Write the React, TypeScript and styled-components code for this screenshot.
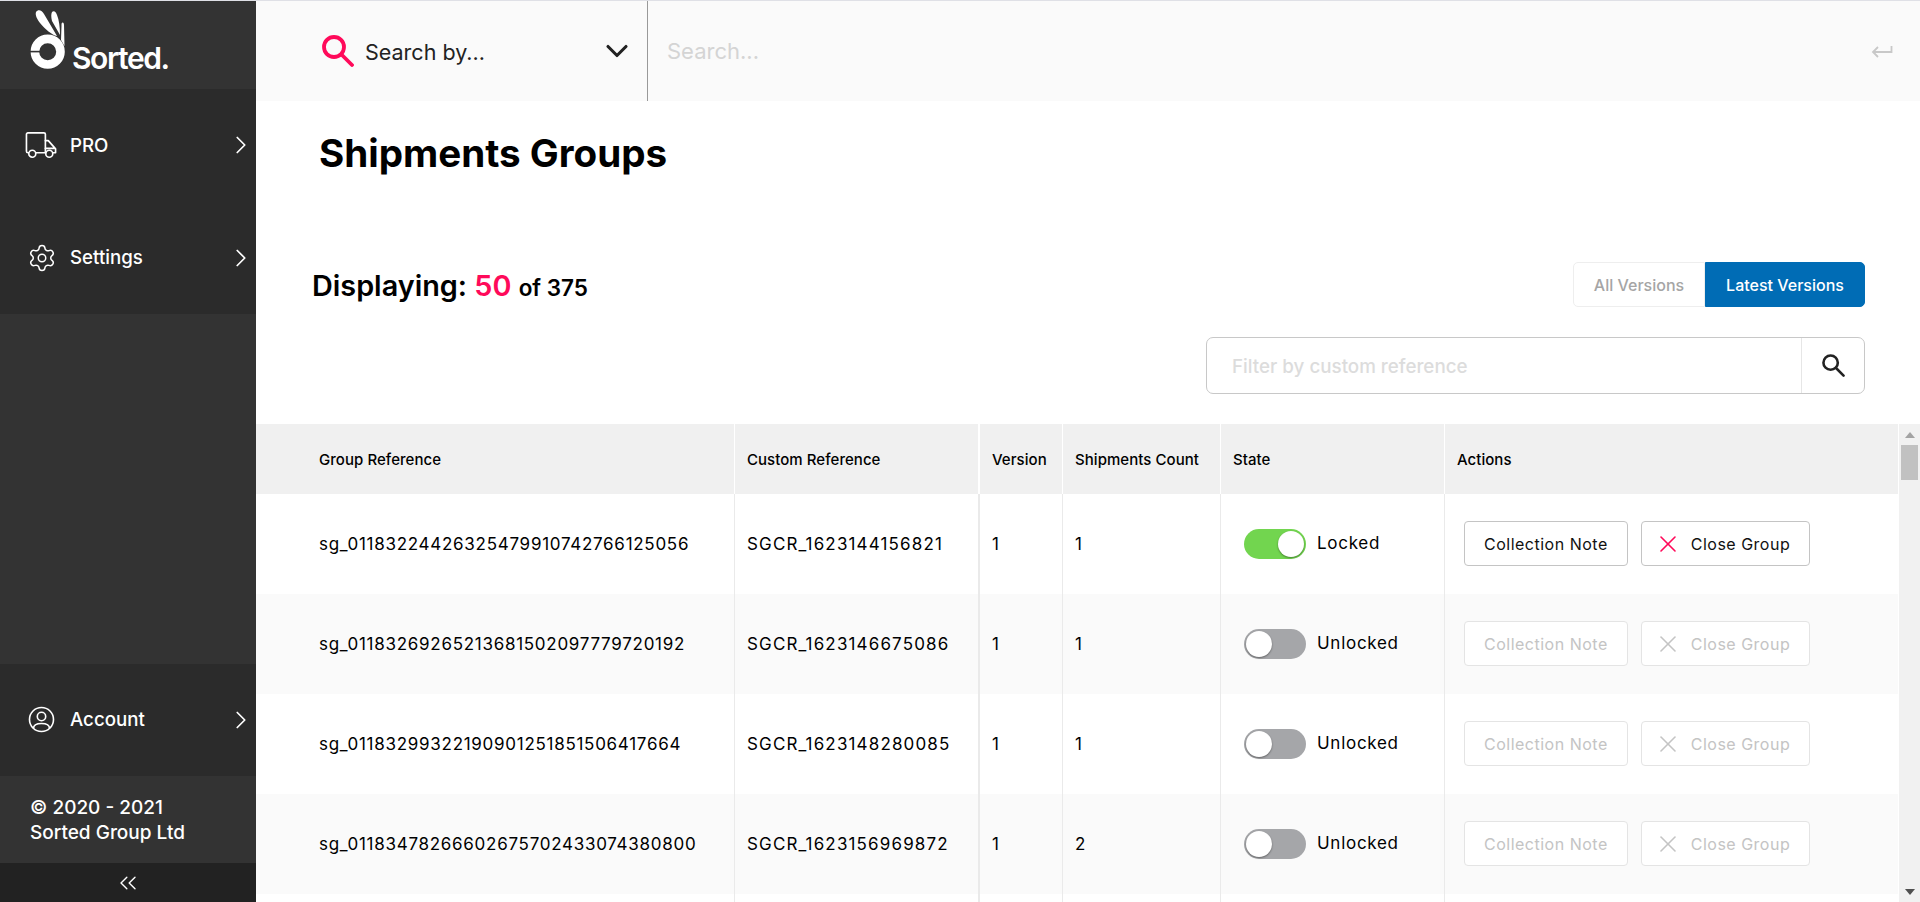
import React from 'react';
import styled, { createGlobalStyle } from 'styled-components';
import { ChevronRight, ChevronsLeft, Settings, X, ChevronDown } from 'lucide-react';

const GlobalStyle = createGlobalStyle`
  html, body {
    margin: 0;
    height: 100%;
    overflow: hidden;
    font-family: Inter, "Open Sans", sans-serif;
    color: #000;
    background: #fff;
  }
  * { box-sizing: border-box; }
`;

const Page = styled.div`
  display: flex;
  height: 902px;
  border-top: 1px solid #dfe0e6;
`;

const Sidebar = styled.aside`
  width: 256px;
  flex: none;
  display: flex;
  flex-direction: column;
  background: #333;
  color: #fff;
`;

const LogoBox = styled.div`
  height: 88px;
  flex: none;
  display: flex;
  align-items: flex-end;
  padding: 0 0 18px 30px;
  gap: 4px;
`;

const LogoText = styled.span`
  font-size: 30px;
  font-weight: 600;
  letter-spacing: -1.4px;
  line-height: 26px;
`;

const NavGroup = styled.div`
  background: #2b2b2b;
`;

const NavItem = styled.div`
  height: 112.5px;
  display: flex;
  align-items: center;
  padding-left: 25px;
  font-size: 18.7px;
  font-weight: 500;
  svg.chevron { margin-left: auto; }
`;

const IconSlot = styled.div`
  width: 33px;
  flex: none;
  display: flex;
  align-items: center;
  justify-content: center;
`;

const NavLabel = styled.span`
  margin-left: 12px;
`;

const SideSpacer = styled.div`
  flex: 1;
`;

const Copyright = styled.div`
  height: 87px;
  flex: none;
  padding: 19px 0 0 30px;
  font-size: 19px;
  line-height: 25px;
  font-weight: 500;
`;

const Collapse = styled.div`
  height: 39px;
  flex: none;
  background: #222;
  display: flex;
  align-items: center;
  justify-content: center;
`;

const Main = styled.main`
  flex: 1;
  min-width: 0;
  display: flex;
  flex-direction: column;
`;

const TopBar = styled.header`
  height: 100px;
  flex: none;
  display: flex;
  background: #fafafa;
`;

const SearchSelect = styled.div`
  width: 392px;
  display: flex;
  align-items: center;
  padding: 0 12px 0 66px;
  border-right: 1px solid #999;
  font-size: 21.5px;
  color: #222;
`;

const SearchByText = styled.span`
  margin: 2px 0 0 11px;
  flex: 1;
`;

const SearchInput = styled.div`
  flex: 1;
  display: flex;
  align-items: center;
  justify-content: space-between;
  padding: 0 27px 0 19px;
  font-size: 22px;
  color: #d4d4d4;
`;

const Heading = styled.div`
  padding: 29px 63px 0;
  height: 161px;
  flex: none;
`;

const Title = styled.h1`
  margin: 0;
  font-size: 38.6px;
  font-weight: 700;
  line-height: 46px;
`;

const DisplayRow = styled.div`
  display: flex;
  flex: none;
  align-items: center;
  justify-content: space-between;
  padding: 0 55px 0 56px;
  height: 45px;
`;

const Displaying = styled.div`
  font-size: 28.8px;
  font-weight: 600;
  margin-top: 2px;
`;

const Count = styled.span`
  color: #ff0a5a;
`;

const OfTotal = styled.span`
  font-size: 22.5px;
`;

const VersionTabs = styled.div`
  display: flex;
  height: 45px;
`;

const VersionTab = styled.div<{ $active?: boolean }>`
  width: ${p => (p.$active ? '160px' : '132px')};
  display: flex;
  align-items: center;
  justify-content: center;
  font-size: 16px;
  font-weight: 500;
  color: ${p => (p.$active ? '#fff' : '#a5a5a5')};
  background: ${p => (p.$active ? '#006cb5' : '#fff')};
  border: 1px solid ${p => (p.$active ? '#006cb5' : '#eee')};
  border-radius: ${p => (p.$active ? '0 5px 5px 0' : '5px 0 0 5px')};
`;

const FilterRow = styled.div`
  display: flex;
  flex: none;
  justify-content: flex-end;
  padding: 30px 55px 30px 0;
`;

const FilterBox = styled.div`
  width: 659px;
  height: 57px;
  display: flex;
  border: 1px solid #c8c8c8;
  border-radius: 7px;
`;

const FilterText = styled.div`
  flex: 1;
  display: flex;
  align-items: center;
  padding: 2px 0 0 25px;
  font-size: 18.8px;
  font-weight: 500;
  color: #dcdcdc;
`;

const FilterButton = styled.div`
  width: 63px;
  display: flex;
  align-items: center;
  justify-content: center;
  border-left: 1px solid #e6e6e6;
`;

const TableRegion = styled.div`
  flex: 1;
  min-height: 0;
  display: flex;
`;

const TableClip = styled.div`
  flex: 1;
  min-width: 0;
  overflow: hidden;
`;

const Row = styled.div<{ $striped?: boolean; $head?: boolean }>`
  display: grid;
  grid-template-columns: 478px 244px 84px 158px 224px 1fr;
  height: ${p => (p.$head ? '70px' : '100px')};
  font-size: ${p => (p.$head ? '15px' : '17px')};
  font-weight: ${p => (p.$head ? 500 : 400)};
  letter-spacing: ${p => (p.$head ? '0.05px' : '0.72px')};
  background: ${p => (p.$head ? '#f0f0f0' : p.$striped ? '#fafafa' : '#fff')};
`;

const Cell = styled.div<{ $first?: boolean; $thick?: boolean }>`
  display: flex;
  align-items: center;
  padding-left: ${p => (p.$first ? '63px' : '12px')};
  border-left: ${p => (p.$first ? 'none' : `${p.$thick ? 2 : 1}px solid #eaeaea`)};
`;

const HeadCell = styled(Cell)`
  border-left-color: #fff;
`;

const CustomRefCell = styled(Cell)`
  letter-spacing: 1.15px;
`;

const StateCell = styled(Cell)`
  padding-left: 23px;
  gap: 11px;
`;

const ActionCell = styled(Cell)`
  padding-left: 19px;
  gap: 13px;
  letter-spacing: 0.5px;
`;

const Track = styled.div<{ $on?: boolean }>`
  width: 62px;
  height: 30px;
  border-radius: 15px;
  padding: 2px;
  display: flex;
  justify-content: ${p => (p.$on ? 'flex-end' : 'flex-start')};
  background: ${p => (p.$on ? '#72d54f' : '#a5a6a9')};
`;

const Knob = styled.div`
  width: 26px;
  height: 26px;
  border-radius: 50%;
  background: #fff;
  box-shadow: 0 1px 2px rgba(0, 0, 0, 0.4);
`;

const StateLabel = styled.span`
  margin-top: -3px;
`;

const ActionButton = styled.div<{ $disabled?: boolean }>`
  height: 45px;
  margin-top: -1px;
  display: flex;
  align-items: center;
  gap: 9px;
  padding: 0 19px;
  font-size: 16px;
  border-radius: 4px;
  background: #fff;
  color: ${p => (p.$disabled ? '#c4c4c4' : '#111')};
  border: 1px solid ${p => (p.$disabled ? '#e4e4e4' : '#c4c4c4')};
  svg {
    margin-left: -7px;
    color: ${p => (p.$disabled ? '#c4c4c4' : '#ff0a5a')};
  }
`;

const Scrollbar = styled.div`
  width: 22px;
  flex: none;
  display: flex;
  flex-direction: column;
  align-items: center;
  padding: 8px 0 7px;
  background: #f1f1f1;
  border-left: 1px solid #fff;
`;

const ScrollArrow = styled.div<{ $down?: boolean }>`
  width: 0;
  height: 0;
  border-left: 5px solid transparent;
  border-right: 5px solid transparent;
  border-${p => (p.$down ? 'top' : 'bottom')}: 6px solid ${p => (p.$down ? '#505050' : '#a3a3a3')};
  margin-top: ${p => (p.$down ? 'auto' : '0')};
`;

const ScrollThumb = styled.div`
  width: 17px;
  height: 35px;
  margin-top: 7px;
  background: #c1c1c1;
`;

const TruckIcon = () => (
  <svg width="34" height="28" viewBox="0 0 34 28" fill="none" stroke="#fff" strokeWidth="1.7" strokeLinejoin="round" strokeLinecap="round">
    <path d="M3.5 22H3A1.5 1.5 0 0 1 1.5 20.5V3A1.5 1.5 0 0 1 3 1.5H19.5A1.5 1.5 0 0 1 21 3V22" />
    <path d="M11.5 22H21.5M21 9.5H24L31.5 18V22H29M21 17.5H31" />
    <circle cx="7.5" cy="23" r="3.6" />
    <circle cx="25" cy="23" r="3.6" />
  </svg>
);

const AccountIcon = () => (
  <svg width="27" height="27" viewBox="0 0 27 27" fill="none" stroke="#fff" strokeWidth="1.6">
    <circle cx="13.5" cy="13.5" r="12" />
    <circle cx="13.5" cy="10.5" r="4.2" />
    <path d="M5.5 22.5C5.5 18.5 9 17.5 13.5 17.5C18 17.5 21.5 18.5 21.5 22.5" />
  </svg>
);

const LogoMark = () => (
  <svg width="38" height="62" viewBox="0 0 38 62" fill="#fff">
    <path d="M6 3C8 0 12 1 14 5L27 27C22 26 15 20 10 14C7 10 5 6 6 3Z" />
    <path d="M22 3C24 1 26 3 27 6C29 11 30 18 30 26L22 12C21 8 21 5 22 3Z" />
    <path d="M32 14C33 13 34 14 34 16L34.5 37L31 31L31.5 17C31.5 15 31.5 14 32 14Z" />
    <circle cx="17.7" cy="42.7" r="12.8" fill="none" stroke="#fff" strokeWidth="8.6" />
    <rect x="0" y="41.8" width="10" height="1.6" fill="#333" />
  </svg>
);

const SearchGlyph = ({ size, color, weight }: { size: number; color: string; weight: number }) => (
  <svg width={size} height={size} viewBox="0 0 32 32" fill="none" stroke={color} strokeLinecap="round">
    <circle cx="12" cy="12" r="10" strokeWidth={weight} />
    <path d="M19.5 19.5L30 30" strokeWidth={weight} />
  </svg>
);

const EnterGlyph = () => (
  <svg width="22" height="13" viewBox="0 0 22 13" fill="none" stroke="#c8c8c8" strokeWidth="1.8">
    <path d="M20.5 1V7H2M7 2L2 7L7 12" />
  </svg>
);

const rows = [
  { ref: 'sg_01183224426325479910742766125056', custom: 'SGCR_1623144156821', shipments: 1, locked: true },
  { ref: 'sg_01183269265213681502097779720192', custom: 'SGCR_1623146675086', shipments: 1, locked: false },
  { ref: 'sg_01183299322190901251851506417664', custom: 'SGCR_1623148280085', shipments: 1, locked: false },
  { ref: 'sg_01183478266602675702433074380800', custom: 'SGCR_1623156969872', shipments: 2, locked: false },
];

const App = () => {
  return (
    <Page>
      <GlobalStyle />
      <Sidebar>
        <LogoBox>
          <LogoMark />
          <LogoText>Sorted.</LogoText>
        </LogoBox>
        <NavGroup>
          <NavItem>
            <IconSlot>
              <TruckIcon />
            </IconSlot>
            <NavLabel>PRO</NavLabel>
            <ChevronRight className="chevron" size={30} strokeWidth={1.4} />
          </NavItem>
          <NavItem>
            <IconSlot>
              <Settings size={30} strokeWidth={1.2} />
            </IconSlot>
            <NavLabel>Settings</NavLabel>
            <ChevronRight className="chevron" size={30} strokeWidth={1.4} />
          </NavItem>
        </NavGroup>
        <SideSpacer />
        <NavGroup>
          <NavItem>
            <IconSlot>
              <AccountIcon />
            </IconSlot>
            <NavLabel>Account</NavLabel>
            <ChevronRight className="chevron" size={30} strokeWidth={1.4} />
          </NavItem>
        </NavGroup>
        <Copyright>
          © 2020 - 2021
          <br />
          Sorted Group Ltd
        </Copyright>
        <Collapse>
          <ChevronsLeft size={28} strokeWidth={1.2} />
        </Collapse>
      </Sidebar>
      <Main>
        <TopBar>
          <SearchSelect>
            <SearchGlyph size={32} color="#ff0a5a" weight={3.8} />
            <SearchByText>Search by...</SearchByText>
            <ChevronDown size={36} strokeWidth={2.1} color="#222" />
          </SearchSelect>
          <SearchInput>
            Search...
            <EnterGlyph />
          </SearchInput>
        </TopBar>
        <Heading>
          <Title>Shipments Groups</Title>
        </Heading>
        <DisplayRow>
          <Displaying>
            Displaying: <Count>50</Count> <OfTotal>of 375</OfTotal>
          </Displaying>
          <VersionTabs>
            <VersionTab>All Versions</VersionTab>
            <VersionTab $active>Latest Versions</VersionTab>
          </VersionTabs>
        </DisplayRow>
        <FilterRow>
          <FilterBox>
            <FilterText>Filter by custom reference</FilterText>
            <FilterButton>
              <SearchGlyph size={23} color="#222" weight={3.6} />
            </FilterButton>
          </FilterBox>
        </FilterRow>
        <TableRegion>
          <TableClip>
            <Row $head>
              <HeadCell $first>Group Reference</HeadCell>
              <HeadCell>Custom Reference</HeadCell>
              <HeadCell $thick>Version</HeadCell>
              <HeadCell>Shipments Count</HeadCell>
              <HeadCell>State</HeadCell>
              <HeadCell>Actions</HeadCell>
            </Row>
            {rows.map((r, i) => (
              <Row key={r.ref} $striped={i % 2 === 1}>
                <Cell $first>{r.ref}</Cell>
                <CustomRefCell>{r.custom}</CustomRefCell>
                <Cell $thick>1</Cell>
                <Cell>{r.shipments}</Cell>
                <StateCell>
                  <Track $on={r.locked}>
                    <Knob />
                  </Track>
                  <StateLabel>{r.locked ? 'Locked' : 'Unlocked'}</StateLabel>
                </StateCell>
                <ActionCell>
                  <ActionButton $disabled={!r.locked}>Collection Note</ActionButton>
                  <ActionButton $disabled={!r.locked}>
                    <X size={28} strokeWidth={1.4} />
                    Close Group
                  </ActionButton>
                </ActionCell>
              </Row>
            ))}
            <Row>
              <Cell $first />
              <Cell />
              <Cell $thick />
              <Cell />
              <Cell />
              <Cell />
            </Row>
          </TableClip>
          <Scrollbar>
            <ScrollArrow />
            <ScrollThumb />
            <ScrollArrow $down />
          </Scrollbar>
        </TableRegion>
      </Main>
    </Page>
  );
};

export default App;
